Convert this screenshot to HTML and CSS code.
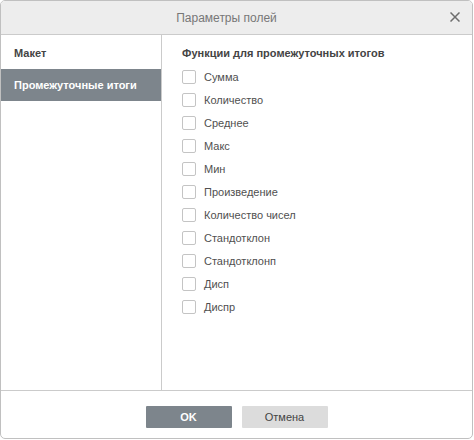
FILE: index.html
```html
<!DOCTYPE html>
<html>
<head>
<meta charset="utf-8">
<link rel="stylesheet" href="styles.css">
</head>
<body>
<div class="dialog">
  <div class="header">
    <div class="title">Параметры полей</div>
    <div class="close">
      <svg width="10" height="10" viewBox="0 0 10 10"><path d="M0.5 0.5 L9.5 9.5 M9.5 0.5 L0.5 9.5" stroke="#6d6d6d" stroke-width="1.5" fill="none"/></svg>
    </div>
  </div>
  <div class="body">
    <div class="side">
      <div class="side-item">Макет</div>
      <div class="side-item active">Промежуточные итоги</div>
    </div>
    <div class="content">
      <div class="heading">Функции для промежуточных итогов</div>
      <div class="row"><span class="cb"></span><span>Сумма</span></div>
      <div class="row"><span class="cb"></span><span>Количество</span></div>
      <div class="row"><span class="cb"></span><span>Среднее</span></div>
      <div class="row"><span class="cb"></span><span>Макс</span></div>
      <div class="row"><span class="cb"></span><span>Мин</span></div>
      <div class="row"><span class="cb"></span><span>Произведение</span></div>
      <div class="row"><span class="cb"></span><span>Количество чисел</span></div>
      <div class="row"><span class="cb"></span><span>Стандотклон</span></div>
      <div class="row"><span class="cb"></span><span>Стандотклонп</span></div>
      <div class="row"><span class="cb"></span><span>Дисп</span></div>
      <div class="row"><span class="cb"></span><span>Диспр</span></div>
    </div>
  </div>
  <div class="footer">
    <button class="btn primary">OK</button>
    <button class="btn">Отмена</button>
  </div>
</div>
</body>
</html>
```
FILE: styles.css
```css
html, body {
  margin: 0;
  padding: 0;
  background: #ffffff;
}
body {
  font-family: "Liberation Sans", Arial, sans-serif;
  font-size: 11px;
  color: #444444;
}
.dialog {
  width: 473px;
  height: 439px;
  box-sizing: border-box;
  border: 1px solid #c0c0c0;
  border-radius: 5px;
  display: flex;
  flex-direction: column;
  overflow: hidden;
  background: #ffffff;
}
.header {
  height: 33px;
  flex: none;
  background: #ededed;
  border-bottom: 1px solid #cbcbcb;
  display: flex;
  align-items: center;
  position: relative;
}
.title {
  flex: 1;
  text-align: center;
  font-size: 12px;
  color: #777777;
  padding-right: 20px;
}
.close {
  position: absolute;
  right: 12px;
  top: 11px;
  width: 10px;
  height: 10px;
  display: flex;
}
.body {
  flex: 1;
  display: flex;
  min-height: 0;
}
.side {
  width: 160px;
  flex: none;
  border-right: 1px solid #cbcbcb;
  padding-top: 2px;
}
.side-item {
  height: 32px;
  display: flex;
  align-items: center;
  padding-left: 13px;
  font-weight: bold;
  color: #444444;
}
.side-item.active {
  background: #7d858c;
  color: #ffffff;
}
.content {
  flex: 1;
  padding: 11px 0 0 20px;
}
.heading {
  font-weight: bold;
  line-height: 14px;
  margin-bottom: 5px;
}
.row {
  height: 23px;
  display: flex;
  align-items: center;
  color: #505050;
}
.cb {
  width: 12px;
  height: 12px;
  border: 1px solid #c4c4c4;
  border-radius: 2px;
  margin-right: 8px;
  flex: none;
}
.footer {
  height: 48px;
  flex: none;
  border-top: 1px solid #cbcbcb;
  display: flex;
  justify-content: center;
  align-items: flex-start;
  padding-top: 15px;
  box-sizing: border-box;
  gap: 10px;
}
.btn {
  width: 86px;
  height: 22px;
  border: none;
  border-radius: 1px;
  background: #dcdcdc;
  color: #444444;
  font-family: "Liberation Sans", Arial, sans-serif;
  font-size: 11px;
  padding: 0;
}
.btn.primary {
  background: #7d858c;
  color: #ffffff;
  font-weight: bold;
}
```
